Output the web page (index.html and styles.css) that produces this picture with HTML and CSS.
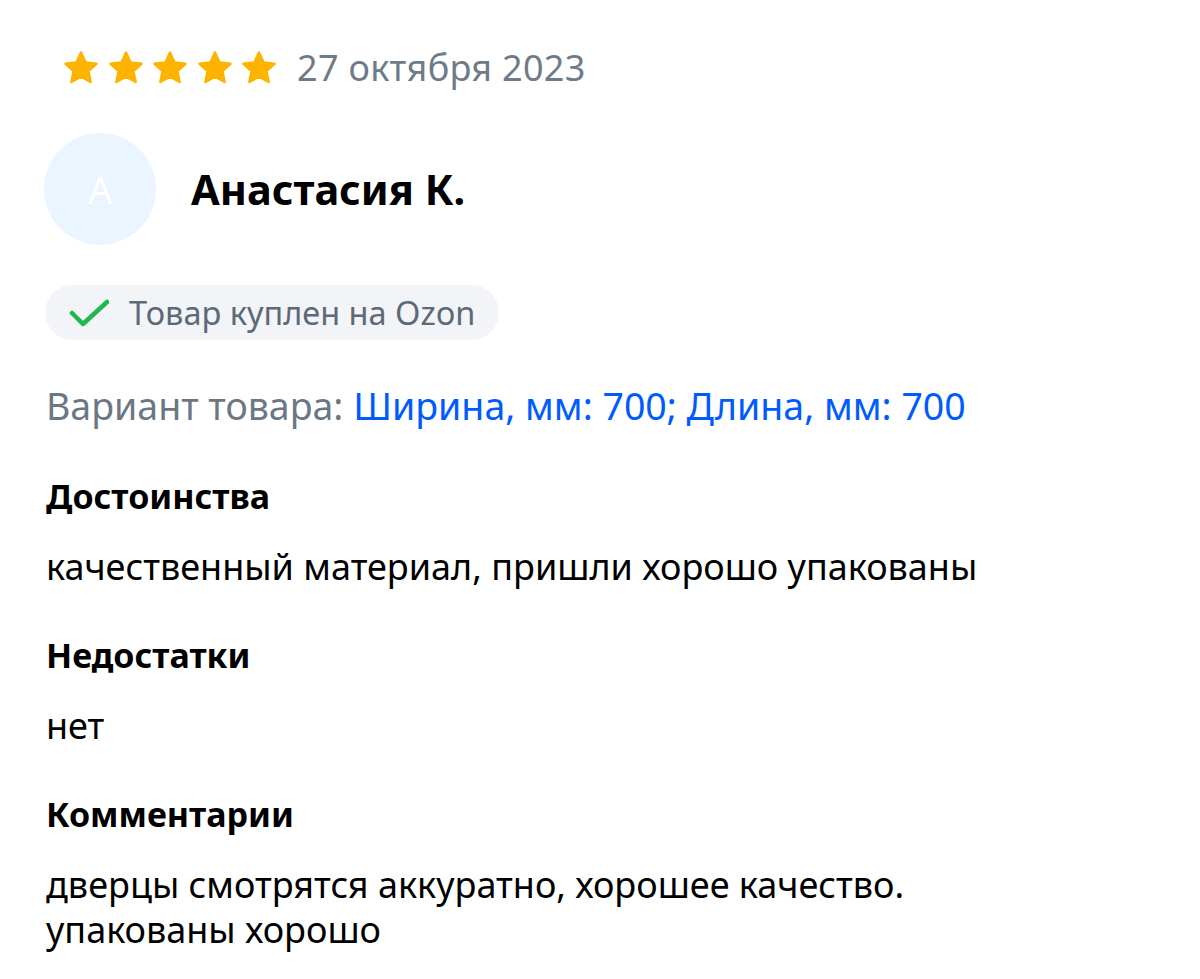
FILE: index.html
```html
<!DOCTYPE html>
<html lang="ru">
<head>
<meta charset="utf-8">
<link rel="stylesheet" href="styles.css">
</head>
<body>
<div class="review">
  <div class="rating-row">
    <div class="stars">
      <svg class="star" viewBox="0 0 24 24"><path d="M12 2.2l2.9 6.3 6.9.8-5.1 4.7 1.4 6.8L12 17.4l-6.1 3.4 1.4-6.8-5.1-4.7 6.9-.8z"/></svg>
      <svg class="star" viewBox="0 0 24 24"><path d="M12 2.2l2.9 6.3 6.9.8-5.1 4.7 1.4 6.8L12 17.4l-6.1 3.4 1.4-6.8-5.1-4.7 6.9-.8z"/></svg>
      <svg class="star" viewBox="0 0 24 24"><path d="M12 2.2l2.9 6.3 6.9.8-5.1 4.7 1.4 6.8L12 17.4l-6.1 3.4 1.4-6.8-5.1-4.7 6.9-.8z"/></svg>
      <svg class="star" viewBox="0 0 24 24"><path d="M12 2.2l2.9 6.3 6.9.8-5.1 4.7 1.4 6.8L12 17.4l-6.1 3.4 1.4-6.8-5.1-4.7 6.9-.8z"/></svg>
      <svg class="star" viewBox="0 0 24 24"><path d="M12 2.2l2.9 6.3 6.9.8-5.1 4.7 1.4 6.8L12 17.4l-6.1 3.4 1.4-6.8-5.1-4.7 6.9-.8z"/></svg>
    </div>
    <span class="date">27 октября 2023</span>
  </div>

  <div class="author">
    <div class="avatar">А</div>
    <div class="name">Анастасия К.</div>
  </div>

  <div class="badge">
    <svg class="check" viewBox="0 0 40 28"><path d="M3 14l11 11L38 3"/></svg>
    <span>Товар куплен на Ozon</span>
  </div>

  <div class="variant"><span class="variant-label">Вариант товара:</span> <span class="variant-value">Ширина, мм: 700; Длина, мм: 700</span></div>

  <div class="section">
    <div class="section-title">Достоинства</div>
    <div class="section-text">качественный материал, пришли хорошо упакованы</div>
  </div>
  <div class="section">
    <div class="section-title">Недостатки</div>
    <div class="section-text">нет</div>
  </div>
  <div class="section">
    <div class="section-title">Комментарии</div>
    <div class="section-text">дверцы смотрятся аккуратно, хорошее качество.<br>упакованы хорошо</div>
  </div>
</div>
</body>
</html>
```

FILE: styles.css
```css
html, body {
  margin: 0;
  padding: 0;
  background: #ffffff;
}

body {
  font-family: "Noto Sans", "DejaVu Sans", sans-serif;
  color: #000000;
}

.review {
  padding: 45px 0 0 46px;
  display: flex;
  flex-direction: column;
  align-items: flex-start;
}

.rating-row {
  display: flex;
  align-items: center;
  height: 45px;
  padding-left: 16px;
}

.stars {
  display: flex;
  gap: 6.5px;
}

.star {
  width: 38px;
  height: 38px;
  fill: #fdb400;
  stroke: #fdb400;
  stroke-width: 1.6;
  stroke-linejoin: round;
}

.date {
  margin-left: 19px;
  font-size: 36px;
  letter-spacing: 0.3px;
  color: #6e7b89;
  line-height: 45px;
}

.author {
  display: flex;
  align-items: center;
  margin-top: 43px;
  margin-left: -2px;
}

.avatar {
  width: 112px;
  height: 112px;
  border-radius: 50%;
  background: #eaf5ff;
  color: #ffffff;
  font-size: 38px;
  display: flex;
  align-items: center;
  justify-content: center;
}

.name {
  margin-left: 35px;
  font-size: 41.5px;
  font-weight: 700;
}

.badge {
  margin-top: 40px;
  margin-left: -1px;
  height: 55px;
  border-radius: 28px;
  background: #f2f4f7;
  display: flex;
  align-items: center;
  padding: 0 24px 0 24px;
}

.check {
  width: 40px;
  height: 28px;
  fill: none;
  stroke: #1fb84f;
  stroke-width: 4.5;
  stroke-linecap: round;
  stroke-linejoin: round;
}

.badge span {
  margin-left: 20px;
  font-size: 32.5px;
  color: #5c6977;
}

.variant {
  margin-top: 43px;
  font-size: 37.5px;
  line-height: 45px;
}

.variant-label {
  color: #6b7784;
}

.variant-value {
  color: #005bff;
}

.section {
  margin-top: 46px;
}

.section + .section {
  margin-top: 44px;
}

.section-title {
  font-size: 34px;
  font-weight: 700;
  line-height: 45px;
}

.section-text {
  margin-top: 25px;
  font-size: 36px;
  line-height: 45px;
}
```
